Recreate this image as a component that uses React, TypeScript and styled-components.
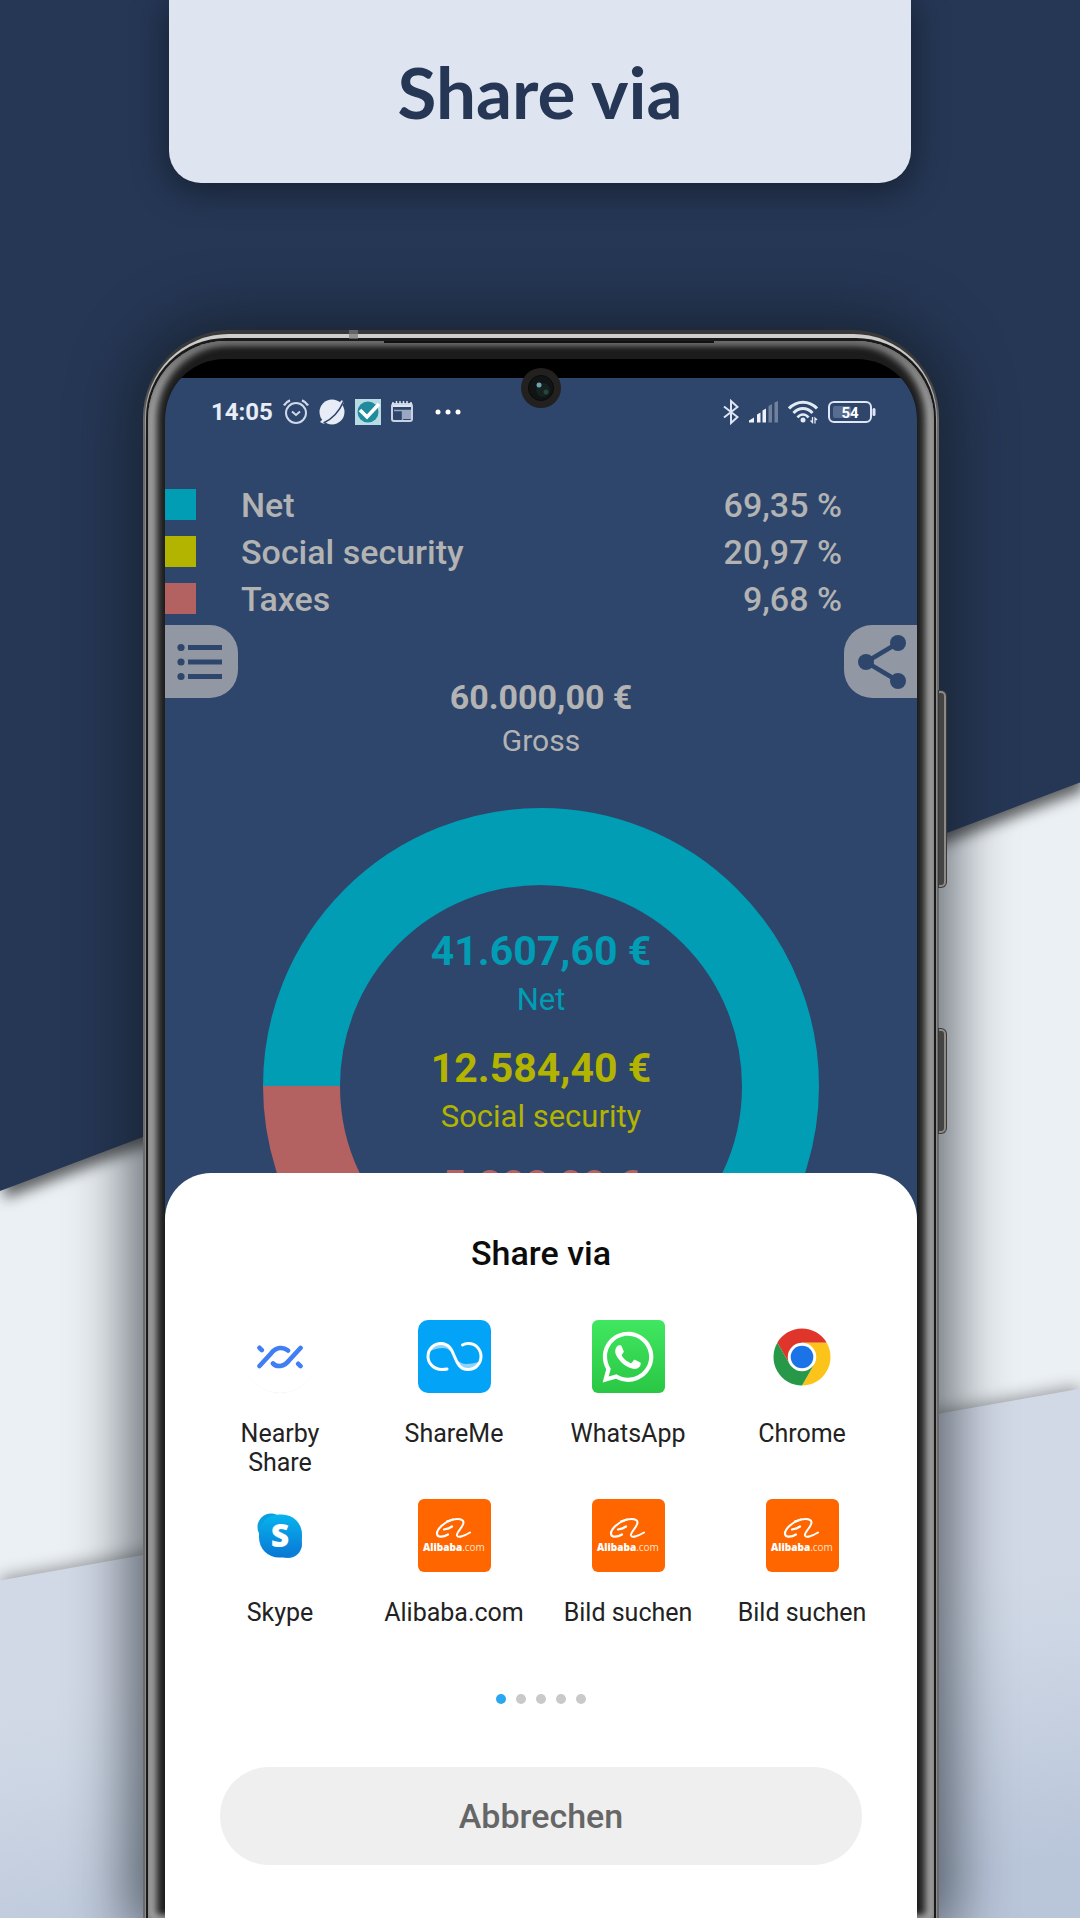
import React from "react";
import styled, { createGlobalStyle } from "styled-components";
import { FaWhatsapp } from "react-icons/fa";

const navy = "#263755";
const screenBlue = "#2e466b";
const teal = "#009db4";
const olive = "#b3b400";
const rose = "#b36161";
const mutedText = "#b3b3b3";

const GlobalStyle = createGlobalStyle`
  *, *::before, *::after { box-sizing: border-box; }
  body {
    margin: 0;
    background: #ebf0f4;
    font-family: Roboto, "Liberation Sans", sans-serif;
  }
  button { font: inherit; border: 0; padding: 0; margin: 0; cursor: pointer; }
  h1, h2, dl, dd, dt, p, ul { margin: 0; padding: 0; }
  ul { list-style: none; }
`;

/* ---------- Poster ---------- */

const Poster = styled.main`
  position: relative;
  display: flex;
  flex-direction: column;
  min-height: 100vh;
  overflow: hidden;
  isolation: isolate;
`;

const BackdropLayer = styled.div<{ $shadow: string }>`
  position: absolute;
  inset: 0;
  z-index: -1;
  filter: drop-shadow(${(p) => p.$shadow});
`;

const NavyShape = styled.div`
  width: 100%;
  height: 100%;
  background: ${navy};
  clip-path: polygon(0 0, 100% 0, 100% 40.8%, 0 62.1%);
`;

const MistShape = styled.div`
  width: 100%;
  height: 100%;
  background: linear-gradient(172deg, #d2d9e6 0, #d2d9e6 82%, #cdd6e4 86%, #b9c5d9 97%);
  clip-path: polygon(0 82.4%, 100% 72.4%, 100% 100%, 0 100%);
`;

const Banner = styled.header`
  align-self: center;
  width: 742px;
  max-width: 90%;
  height: 183px;
  display: flex;
  align-items: center;
  justify-content: center;
  border-radius: 0 0 32px 32px;
  background: #dee5f0;
  box-shadow: 0 6px 32px 2px rgba(16, 24, 38, 0.75);
`;

const BannerTitle = styled.h1`
  font: 700 71px/84px Lato, "Open Sans", sans-serif;
  color: ${navy};
`;

/* ---------- Phone ---------- */

const Phone = styled.section`
  position: relative;
  flex: 1;
  display: flex;
  margin: 147px 141px 0 143px;
  padding: 4px 2px 0;
  border-radius: 88px 88px 0 0;
  background: linear-gradient(#383838 0, #383838 40px, #6a6a6a 90px);
  box-shadow: 0 0 56px 16px rgba(20, 28, 36, 0.62);
`;

const FrameShine = styled.div`
  flex: 1;
  display: flex;
  padding: 4px 1px 0;
  border-radius: 84px 84px 0 0;
  background: linear-gradient(#cfcfcf 0, #bdbdbd 40px, #8c8c8c 110px);
`;

const FrameGap = styled.div`
  flex: 1;
  display: flex;
  padding: 3px 2px 0;
  border-radius: 80px 80px 0 0;
  background: #1a1a1a;
`;

const Bezel = styled.div`
  position: relative;
  flex: 1;
  display: flex;
  padding: 18px 17px 0;
  border-radius: 78px 78px 0 0;
  background: #1c1c1c;
  box-shadow: inset 0 3px 8px #5c5c5c, inset 8px 0 8px #bdbdbd, inset -8px 0 8px #bdbdbd;
`;

const Earpiece = styled.span`
  position: absolute;
  top: 0;
  left: 30%;
  right: 28%;
  height: 2px;
  background: #111;
`;

const SideKey = styled.span<{ $top: number; $height: number }>`
  position: absolute;
  left: 100%;
  top: ${(p) => p.$top}px;
  width: 7px;
  height: ${(p) => p.$height}px;
  border: 2px solid #8d8a86;
  border-left: 0;
  border-radius: 0 5px 5px 0;
  background: #444;
  box-shadow: 0 0 0 1px #3a3a3a;
`;

const Antenna = styled.span`
  position: absolute;
  top: 0;
  left: 206px;
  width: 9px;
  height: 9px;
  background: #777;
  opacity: 0.7;
`;

const Display = styled.div`
  position: relative;
  flex: 1;
  display: flex;
  flex-direction: column;
  padding-top: 19px;
  border-radius: 60px 60px 0 0;
  background: #000;
  overflow: hidden;
`;

const CameraHole = styled.svg`
  position: absolute;
  left: 50%;
  top: 9px;
  width: 40px;
  height: 40px;
  margin-left: -20px;
  z-index: 2;
`;

const AppScreen = styled.div`
  flex: 1;
  display: flex;
  flex-direction: column;
  background: ${screenBlue};
`;

const StatusBar = styled.div`
  display: flex;
  align-items: center;
  justify-content: space-between;
  height: 68px;
  padding: 0 41px 0 46px;
  color: #e8ecf6;
`;

const StatusGroup = styled.div<{ $gap: number }>`
  display: flex;
  align-items: center;
  gap: ${(p) => p.$gap}px;
`;

const Clock = styled.time`
  font-size: 24px;
  line-height: 28px;
  font-weight: 700;
`;

const Glyph = styled.svg`
  display: block;
  flex: none;
`;

/* ---------- Legend ---------- */

const Legend = styled.dl`
  display: flex;
  flex-direction: column;
  gap: 16px;
  padding: 43px 75px 0 0;
`;

const LegendRow = styled.div`
  display: flex;
  align-items: center;
  height: 31px;
  font-size: 34px;
  line-height: 40px;
  font-weight: 500;
  color: ${mutedText};
`;

const Swatch = styled.span<{ $color: string }>`
  width: 31px;
  height: 31px;
  margin-right: 45px;
  background: ${(p) => p.$color};
`;

const LegendName = styled.dt`
  flex: 1;
`;

const LegendShare = styled.dd`
  text-align: right;
`;

const TabRow = styled.div`
  display: flex;
  justify-content: space-between;
  margin-top: 11px;
`;

const SideTab = styled.button<{ $side: "left" | "right" }>`
  display: flex;
  align-items: center;
  justify-content: ${(p) => (p.$side === "left" ? "flex-start" : "flex-end")};
  width: 73px;
  height: 73px;
  padding: 0 11px;
  border-radius: ${(p) => (p.$side === "left" ? "0 28px 28px 0" : "28px 0 0 28px")};
  background: #9198a4;
  color: ${screenBlue};
`;

/* ---------- Amounts ---------- */

const Amount = styled.div<{ $color: string; $large?: boolean }>`
  display: flex;
  flex-direction: column;
  align-items: center;
  gap: 6px;
  color: ${(p) => p.$color};

  strong {
    font-size: ${(p) => (p.$large ? 41 : 34)}px;
    line-height: ${(p) => (p.$large ? 49 : 40)}px;
    font-weight: 700;
  }
  span {
    font-size: ${(p) => (p.$large ? 31 : 30)}px;
    line-height: 36px;
  }
`;

const GrossBlock = styled.div`
  margin-top: -21px;
`;

const Chart = styled.div`
  display: grid;
  justify-items: center;
  height: 365px;
  margin-top: 49px;
  overflow: hidden;

  > * { grid-area: 1 / 1; }
`;

const ChartAmounts = styled.div`
  display: flex;
  flex-direction: column;
  gap: 26px;
  padding-top: 119px;
`;

/* ---------- Share sheet ---------- */

const Sheet = styled.section`
  flex: 1;
  display: flex;
  flex-direction: column;
  align-items: center;
  padding: 60px 28px 50px;
  border-radius: 46px 46px 0 0;
  background: #fff;
`;

const SheetTitle = styled.h2`
  font-size: 34px;
  line-height: 40px;
  font-weight: 500;
  color: #0c0c0c;
`;

const TargetGrid = styled.ul`
  align-self: stretch;
  display: grid;
  grid-template-columns: repeat(4, 1fr);
  grid-auto-rows: 179px;
  margin-top: 47px;
`;

const TargetCell = styled.li`
  display: flex;
  justify-content: center;
`;

const Target = styled.button`
  display: flex;
  flex-direction: column;
  align-items: center;
  justify-content: flex-start;
  gap: 26px;
  width: 150px;
  background: none;
  color: #222;
  font-size: 25px;
  line-height: 29px;
`;

const TargetLabel = styled.span<{ $narrow?: boolean }>`
  width: ${(p) => (p.$narrow ? "100px" : "auto")};
  white-space: ${(p) => (p.$narrow ? "normal" : "nowrap")};
`;

const Tile = styled.span<{ $background?: string; $radius?: number }>`
  display: flex;
  flex-direction: column;
  align-items: center;
  justify-content: center;
  width: 73px;
  height: 73px;
  border-radius: ${(p) => p.$radius ?? 6}px;
  background: ${(p) => p.$background ?? "transparent"};
  color: #fff;
`;

const NearbyDisc = styled.span`
  display: flex;
  align-items: center;
  justify-content: center;
  width: 73px;
  height: 73px;
  border-radius: 50%;
  box-shadow: 0 1px 1px -1px #ddd;
`;

const AlibabaName = styled.span`
  font: 400 10px/14px "Open Sans", sans-serif;
  color: #ffe3cf;

  b { font-weight: 800; color: #fff; }
`;

const Pager = styled.div`
  display: flex;
  gap: 10px;
  margin-top: 16px;
`;

const PagerDot = styled.span<{ $active: boolean }>`
  width: 10px;
  height: 10px;
  border-radius: 50%;
  background: ${(p) => (p.$active ? "#2aa7f0" : "#c9c9c9")};
`;

const CancelButton = styled.button`
  width: 642px;
  max-width: 100%;
  height: 98px;
  margin-top: 63px;
  border-radius: 49px;
  background: #efefef;
  color: #666;
  font-size: 34px;
  line-height: 40px;
  font-weight: 500;
`;

/* ---------- Drawings ---------- */

const AlarmIcon = () => (
  <Glyph width="26" height="26" viewBox="0 0 26 26" fill="none" stroke="#cfd8ea" strokeWidth="2">
    <circle cx="13" cy="14" r="10" />
    <path d="M9 12.5l4 3.5 4-3.5" />
    <path d="M1 6.5C2.500 4 4.500 2.300 7 1.300M25 6.500C23.500 4 21.500 2.300 19 1.300" strokeWidth="2.400" />
  </Glyph>
);

const PlanetIcon = () => (
  <Glyph width="26" height="26" viewBox="0 0 26 26">
    <circle cx="13" cy="13" r="12.500" fill="#e8ecf6" />
    <path d="M1 23l4 2L25 4l-2-3z" fill="#e8ecf6" />
    <path d="M4.500 24C12 20.500 20 13 24.500 2.500" fill="none" stroke={screenBlue} strokeWidth="1.600" />
  </Glyph>
);

const CheckIcon = () => (
  <Glyph width="26" height="26" viewBox="0 0 26 26">
    <rect width="26" height="26" fill="#b8dce4" />
    <circle cx="13" cy="13" r="10.500" fill="#1f8b9d" />
    <path d="M5 11l7 7L24 5" fill="none" stroke="#fff" strokeWidth="3.600" />
  </Glyph>
);

const NewsIcon = () => (
  <Glyph width="22" height="22" viewBox="0 0 22 22">
    <path d="M1 2h20v4H1z" fill="#dfe5f1" />
    <rect x="1" y="3" width="20" height="17" rx="2" fill="none" stroke="#c9d2e4" strokeWidth="2" />
    <path d="M2 1v3M5.500 0v3M9 0v3M12.500 0v3M16 0v3M20 1v3" stroke="#dfe5f1" strokeWidth="1.500" />
    <path d="M12 10h8v8h-8z" fill="#9aa8c2" />
    <path d="M3 9.500h17M11.500 10v9" stroke="#9aa8c2" strokeWidth="1.400" />
  </Glyph>
);

const MoreIcon = () => (
  <Glyph width="26" height="6" viewBox="0 0 26 6" fill="#fff">
    <circle cx="3" cy="3" r="2.500" />
    <circle cx="13" cy="3" r="2.500" />
    <circle cx="23" cy="3" r="2.500" />
  </Glyph>
);

const BluetoothIcon = () => (
  <Glyph width="16" height="26" viewBox="0 0 16 26" fill="none" stroke="#dde4f4" strokeWidth="2">
    <path d="M1 7.500L14.500 18 8 24V2l6.500 6L1 18.500" />
  </Glyph>
);

const SignalIcon = () => (
  <Glyph width="29" height="22" viewBox="0 0 29 22" fill="#eef1fa">
    <path d="M0 21.500v-2l5-3v5z" />
    <path d="M8 21.500v-8l3.500-2v10z" />
    <path d="M13.500 21.500V9.500l3.500-2v14z" />
    <path d="M19.500 21.500V5l3.500-2v18.500zM25.500 21.500V1.500L29 0v21.500z" opacity=".35" />
  </Glyph>
);

const WifiIcon = () => (
  <Glyph width="30" height="24" viewBox="0 0 30 24" fill="none" stroke="#e4e9f6" strokeWidth="3">
    <path d="M1 8.500C9 0 21 0 29 8.500" />
    <path d="M5.500 13C11 7 19 7 24.500 13" />
    <path d="M9.500 17.500C12.500 13.500 17.500 13.500 20.500 17.500" strokeWidth="2.600" />
    <circle cx="15" cy="20" r="2.500" fill="#e4e9f6" stroke="none" />
    <path d="M24.500 17v5.500l-2-2M27 23.500V18l2 2" strokeWidth="1.300" />
  </Glyph>
);

const BatteryIcon = () => (
  <Glyph width="48" height="22" viewBox="0 0 48 22">
    <rect x="1" y="1" width="42" height="20" rx="5" fill="none" stroke="#dfe6f5" strokeWidth="2" />
    <rect x="5" y="5" width="18" height="12" rx="2" fill="#596d90" />
    <path d="M46 8.500v5" stroke="#dfe6f5" strokeWidth="3" strokeLinecap="round" />
    <text x="22" y="16.500" textAnchor="middle" fontFamily="Roboto, sans-serif" fontSize="15" fontWeight="700" fill="#fff">
      54
    </text>
  </Glyph>
);

const ListIcon = () => (
  <Glyph width="46" height="38" viewBox="0 0 46 38" aria-hidden="true">
    {[4.5, 19, 33.5].map((y) => (
      <g key={y}>
        <circle cx="5" cy={y} r="3.600" fill="currentColor" />
        <rect x="12" y={y - 2.5} width="34" height="5" fill="currentColor" />
      </g>
    ))}
  </Glyph>
);

const ShareIcon = () => (
  <Glyph width="48" height="54" viewBox="0 0 48 54" fill="currentColor" aria-hidden="true">
    <path d="M40 8L8 27l32 19" fill="none" stroke="currentColor" strokeWidth="4.500" />
    <circle cx="8" cy="27" r="8" />
    <circle cx="40" cy="8" r="8" />
    <circle cx="40" cy="46" r="8" />
  </Glyph>
);

const Donut = ({ parts }: { parts: { color: string; value: number }[] }) => {
  let start = 0;
  return (
    <Glyph width="556" height="556" viewBox="0 0 556 556" role="img" aria-label="Share of gross salary">
      {parts.map(({ color, value }) => {
        const offset = start;
        start += value;
        return (
          <circle
            key={color}
            cx="278"
            cy="278"
            r="239.500"
            fill="none"
            stroke={color}
            strokeWidth="77"
            pathLength={100}
            strokeDasharray={`${value} ${100 - value}`}
            strokeDashoffset={-offset}
            transform="rotate(180 278 278)"
          />
        );
      })}
    </Glyph>
  );
};

const NearbyLogo = () => (
  <NearbyDisc>
    <Glyph width="46" height="24" viewBox="0 0 46 24" fill="none" stroke="#3f7ef3" strokeWidth="4.600" strokeLinecap="round">
      <path d="M2.500 2.800l2.300 2.300" />
      <path d="M2.500 21L14 8.500C19 2 26 1.500 31 5.500" />
      <path d="M43.500 3L32 15.500C27 22 20 22.500 16 18.500" />
      <path d="M41.200 18.800l2.300 2.300" />
    </Glyph>
  </NearbyDisc>
);

const ShareMeLogo = () => (
  <Tile $background="#03a4f8" $radius={10}>
    <Glyph width="73" height="73" viewBox="0 0 73 73" fill="none">
      <path d="M12 31C15 24 19 23 24 23c7 0 10 6 12.500 13C33 31 30 28 25 28c-5 0-8 1-13 3z" fill="#8cd4fb" />
      <path d="M61 42c-3 6-7 7-12 7-6 0-9-6-12-12 3 4 6 7 11 7 5 0 8-1 13-2z" fill="#8cd4fb" />
      <path
        d="M29 49C27 49.500 26 49.500 24 49.500 16 49.500 10 43.500 10 36.500 10 29 16 23.500 23 23.500 31 23.500 34 30 36.500 36.500 39 43 42 49.500 50 49.500 57.500 49.500 63 43.500 63 36.500 63 29 57.500 23.500 50.500 23.500 48 23.500 46 24 44.500 25"
        stroke="#fff"
        strokeWidth="3"
        strokeLinecap="round"
      />
    </Glyph>
  </Tile>
);

const WhatsAppLogo = () => (
  <Tile $background="linear-gradient(#41e760, #29c744)">
    <FaWhatsapp size={58} />
  </Tile>
);

const ChromeLogo = () => (
  <Tile>
    <Glyph width="58" height="58" viewBox="-29 -29 58 58">
      <path d="M-24.680-14.250A28.500 28.500 0 0 1 24.680-14.250L0-14.250-12.340 7.120z" fill="#e0352b" />
      <path d="M24.680-14.250A28.500 28.500 0 0 1 0 28.500L12.340 7.120 0-14.250z" fill="#fcc31b" />
      <path d="M0 28.500A28.500 28.500 0 0 1-24.680-14.250L-12.340 7.120 12.340 7.120z" fill="#279847" />
      <circle r="14.250" fill="#fff" />
      <circle r="11.300" fill="#1b73e8" />
    </Glyph>
  </Tile>
);

const SkypeLogo = () => (
  <Tile>
    <Glyph width="46" height="46" viewBox="0 0 46 46">
      <defs>
        <linearGradient id="skypeBlue" x1="0" y1="0" x2="0" y2="1">
          <stop offset="0" stopColor="#06b4ee" />
          <stop offset="1" stopColor="#0a76d4" />
        </linearGradient>
      </defs>
      <circle cx="14" cy="14" r="13.500" fill="#0a9fdf" />
      <circle cx="31" cy="31" r="14" fill="#0a80d8" />
      <rect x="2" y="1.500" width="43" height="43" rx="20" fill="url(#skypeBlue)" />
      <text x="23" y="34" textAnchor="middle" fontFamily="'Open Sans', sans-serif" fontSize="32" fontWeight="800" fill="#fff">
        S
      </text>
    </Glyph>
  </Tile>
);

const AlibabaLogo = () => (
  <Tile $background="#ff6600">
    <Glyph width="38" height="22" viewBox="0 0 38 22" fill="none" stroke="#fff" strokeLinecap="round" strokeLinejoin="round">
      <path d="M9 11.500C12 11 15 10 17 8.500M18 1.500C9 4 2 11 2 15.500 2 20 9 19 13 16.500" strokeWidth="2.200" />
      <path d="M12 3.500C18 .500 28.500-.500 28.500 4.500 28.500 9 21 14 22 17.500 23 20.500 30 17.500 35 14.500" strokeWidth="2" />
    </Glyph>
    <AlibabaName>
      <b>Alibaba</b>.com
    </AlibabaName>
  </Tile>
);

/* ---------- Data ---------- */

const parts = [
  { name: "Net", share: "69,35 %", value: 69.35, color: teal, amount: "41.607,60 €", caption: "Net" },
  {
    name: "Social security",
    share: "20,97 %",
    value: 20.97,
    color: olive,
    amount: "12.584,40 €",
    caption: "Social security",
  },
  { name: "Taxes", share: "9,68 %", value: 9.68, color: rose, amount: "5.808,00 €", caption: "" },
];

const targets = [
  { label: "Nearby Share", Logo: NearbyLogo, narrow: true },
  { label: "ShareMe", Logo: ShareMeLogo },
  { label: "WhatsApp", Logo: WhatsAppLogo },
  { label: "Chrome", Logo: ChromeLogo },
  { label: "Skype", Logo: SkypeLogo },
  { label: "Alibaba.com", Logo: AlibabaLogo },
  { label: "Bild suchen", Logo: AlibabaLogo },
  { label: "Bild suchen", Logo: AlibabaLogo },
];

export default function App() {
  return (
    <>
      <GlobalStyle />
      <Poster>
        <BackdropLayer $shadow="0 -3px 8px rgba(0, 0, 0, 0.35)">
          <MistShape />
        </BackdropLayer>
        <BackdropLayer $shadow="4px 8px 7px rgba(0, 0, 0, 0.6)">
          <NavyShape />
        </BackdropLayer>

        <Banner>
          <BannerTitle>Share via</BannerTitle>
        </Banner>

        <Phone>
          <SideKey $top={361} $height={196} />
          <SideKey $top={699} $height={104} />
          <FrameShine>
            <FrameGap>
              <Bezel>
                <Earpiece />
                <Display>
                  <CameraHole viewBox="0 0 40 40">
                    <circle cx="20" cy="20" r="20" fill="#222120" />
                    <circle cx="20" cy="20" r="12.500" fill="#101414" stroke="#0a0a0a" />
                    <circle cx="22" cy="22" r="7" fill="#13211f" />
                    <circle cx="18" cy="17" r="2.500" fill="#6fa3b2" />
                    <circle cx="25" cy="24" r="2.500" fill="#24463e" />
                  </CameraHole>
                  <AppScreen>
                    <StatusBar>
                      <StatusGroup $gap={22}>
                        <StatusGroup $gap={10}>
                          <Clock>14:05</Clock>
                          <AlarmIcon />
                          <PlanetIcon />
                          <CheckIcon />
                          <NewsIcon />
                        </StatusGroup>
                        <MoreIcon />
                      </StatusGroup>
                      <StatusGroup $gap={10}>
                        <BluetoothIcon />
                        <SignalIcon />
                        <WifiIcon />
                        <BatteryIcon />
                      </StatusGroup>
                    </StatusBar>

                    <Legend>
                      {parts.map(({ name, share, color }) => (
                        <LegendRow key={name}>
                          <Swatch $color={color} />
                          <LegendName>{name}</LegendName>
                          <LegendShare>{share}</LegendShare>
                        </LegendRow>
                      ))}
                    </Legend>

                    <TabRow>
                      <SideTab $side="left" aria-label="List">
                        <ListIcon />
                      </SideTab>
                      <SideTab $side="right" aria-label="Share">
                        <ShareIcon />
                      </SideTab>
                    </TabRow>

                    <GrossBlock>
                      <Amount $color={mutedText}>
                        <strong>60.000,00 €</strong>
                        <span>Gross</span>
                      </Amount>
                    </GrossBlock>

                    <Chart>
                      <Donut parts={parts} />
                      <ChartAmounts>
                        {parts.map(({ name, amount, color, caption }) => (
                          <Amount key={name} $color={color} $large>
                            <strong>{amount}</strong>
                            {caption && <span>{caption}</span>}
                          </Amount>
                        ))}
                      </ChartAmounts>
                    </Chart>

                    <Sheet>
                      <SheetTitle>Share via</SheetTitle>
                      <TargetGrid>
                        {targets.map(({ label, Logo, narrow }, i) => (
                          <TargetCell key={i}>
                            <Target>
                              <Logo />
                              <TargetLabel $narrow={narrow}>{label}</TargetLabel>
                            </Target>
                          </TargetCell>
                        ))}
                      </TargetGrid>
                      <Pager>
                        {[0, 1, 2, 3, 4].map((i) => (
                          <PagerDot key={i} $active={i === 0} />
                        ))}
                      </Pager>
                      <CancelButton>Abbrechen</CancelButton>
                    </Sheet>
                  </AppScreen>
                </Display>
              </Bezel>
            </FrameGap>
          </FrameShine>
          <Antenna />
        </Phone>
      </Poster>
    </>
  );
}
